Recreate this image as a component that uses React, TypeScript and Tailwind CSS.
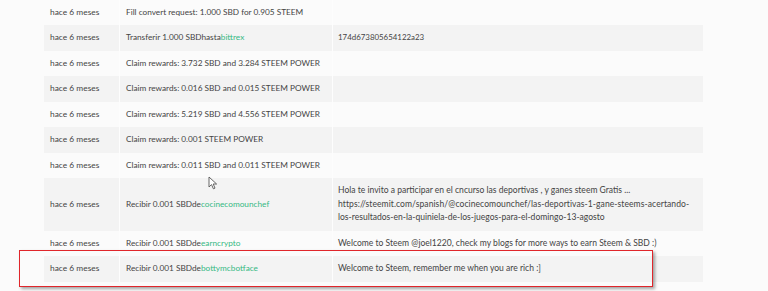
type Row = {
  desc: React.ReactNode
  memo?: React.ReactNode
  memoSmall?: boolean
}

function Link({ children }: { children: React.ReactNode }) {
  return <span className="text-[#35b983]">{children}</span>
}

const rows: Row[] = [
  { desc: 'Fill convert request: 1.000 SBD for 0.905 STEEM' },
  { desc: <>Transferir 1.000 SBDhasta<Link>bittrex</Link></>, memo: '174d673805654122a23', memoSmall: true },
  { desc: 'Claim rewards: 3.732 SBD and 3.284 STEEM POWER' },
  { desc: 'Claim rewards: 0.016 SBD and 0.015 STEEM POWER' },
  { desc: 'Claim rewards: 5.219 SBD and 4.556 STEEM POWER' },
  { desc: 'Claim rewards: 0.001 STEEM POWER' },
  { desc: 'Claim rewards: 0.011 SBD and 0.011 STEEM POWER' },
  {
    desc: <>Recibir 0.001 SBDde<Link>cocinecomounchef</Link></>,
    memo: (
      <>
        Hola te invito a participar en el cncurso las deportivas , y ganes steem Gratis ...
        <br />
        <span className="tracking-[0.07px]">
          https://steemit.com/spanish/@cocinecomounchef/las-deportivas-1-gane-steems-acertando-
        </span>
        <br />
        los-resultados-en-la-quiniela-de-los-juegos-para-el-domingo-13-agosto
      </>
    ),
  },
  {
    desc: <>Recibir 0.001 SBDde<Link>earncrypto</Link></>,
    memo: 'Welcome to Steem @joel1220, check my blogs for more ways to earn Steem & SBD :)',
  },
  {
    desc: <>Recibir 0.001 SBDde<Link>bottymcbotface</Link></>,
    memo: 'Welcome to Steem, remember me when you are rich :]',
  },
]

export default function App() {
  return (
    <div
      className="relative w-[768px] h-[291px] overflow-hidden bg-[#fbfbfb] text-[#444] text-[8.4px] leading-[13.5px]"
      style={{ fontFamily: 'Lato, "Noto Sans", sans-serif' }}
    >
      <div className="ml-[44px] w-[659px] -mt-[0.5px]">
        {rows.map((r, i) => (
          <div key={i} className={`flex ${i % 2 === 1 ? 'bg-[#f3f3f3]' : 'bg-[#fbfbfb]'}`}>
            <div className="w-[75px] shrink-0 py-[6px] pl-[6px] flex items-center">hace 6 meses</div>
            <div className="w-[213px] shrink-0 py-[6px] pl-[6px] border-l-[1.5px] border-[#fdfdfd] flex items-center whitespace-nowrap text-[8.25px]">
              {r.desc}
            </div>
            <div
              className={`flex-1 py-[6px] pl-[5px] border-l-[1.5px] border-[#fdfdfd] flex items-center whitespace-nowrap ${
                r.memoSmall ? 'text-[7.9px]' : 'text-[8.55px]'
              }`}
            >
              <div>{r.memo}</div>
            </div>
          </div>
        ))}
      </div>

      {/* highlight box */}
      <div className="absolute left-[19px] top-[250px] w-[634px] h-[37px] border-[1.5px] border-[#e0262b] shadow-[2px_2px_3px_rgba(0,0,0,0.35)]" />

      {/* mouse cursor */}
      <svg className="absolute left-[208px] top-[176px]" width="10" height="14" viewBox="0 0 10 14">
        <path d="M1 1 L1 11 L3.5 8.6 L5.4 12.8 L7 12.1 L5.2 8 L8.6 8 Z" fill="#fff" stroke="#555" strokeWidth="0.9" strokeLinejoin="round" />
      </svg>
    </div>
  )
}
